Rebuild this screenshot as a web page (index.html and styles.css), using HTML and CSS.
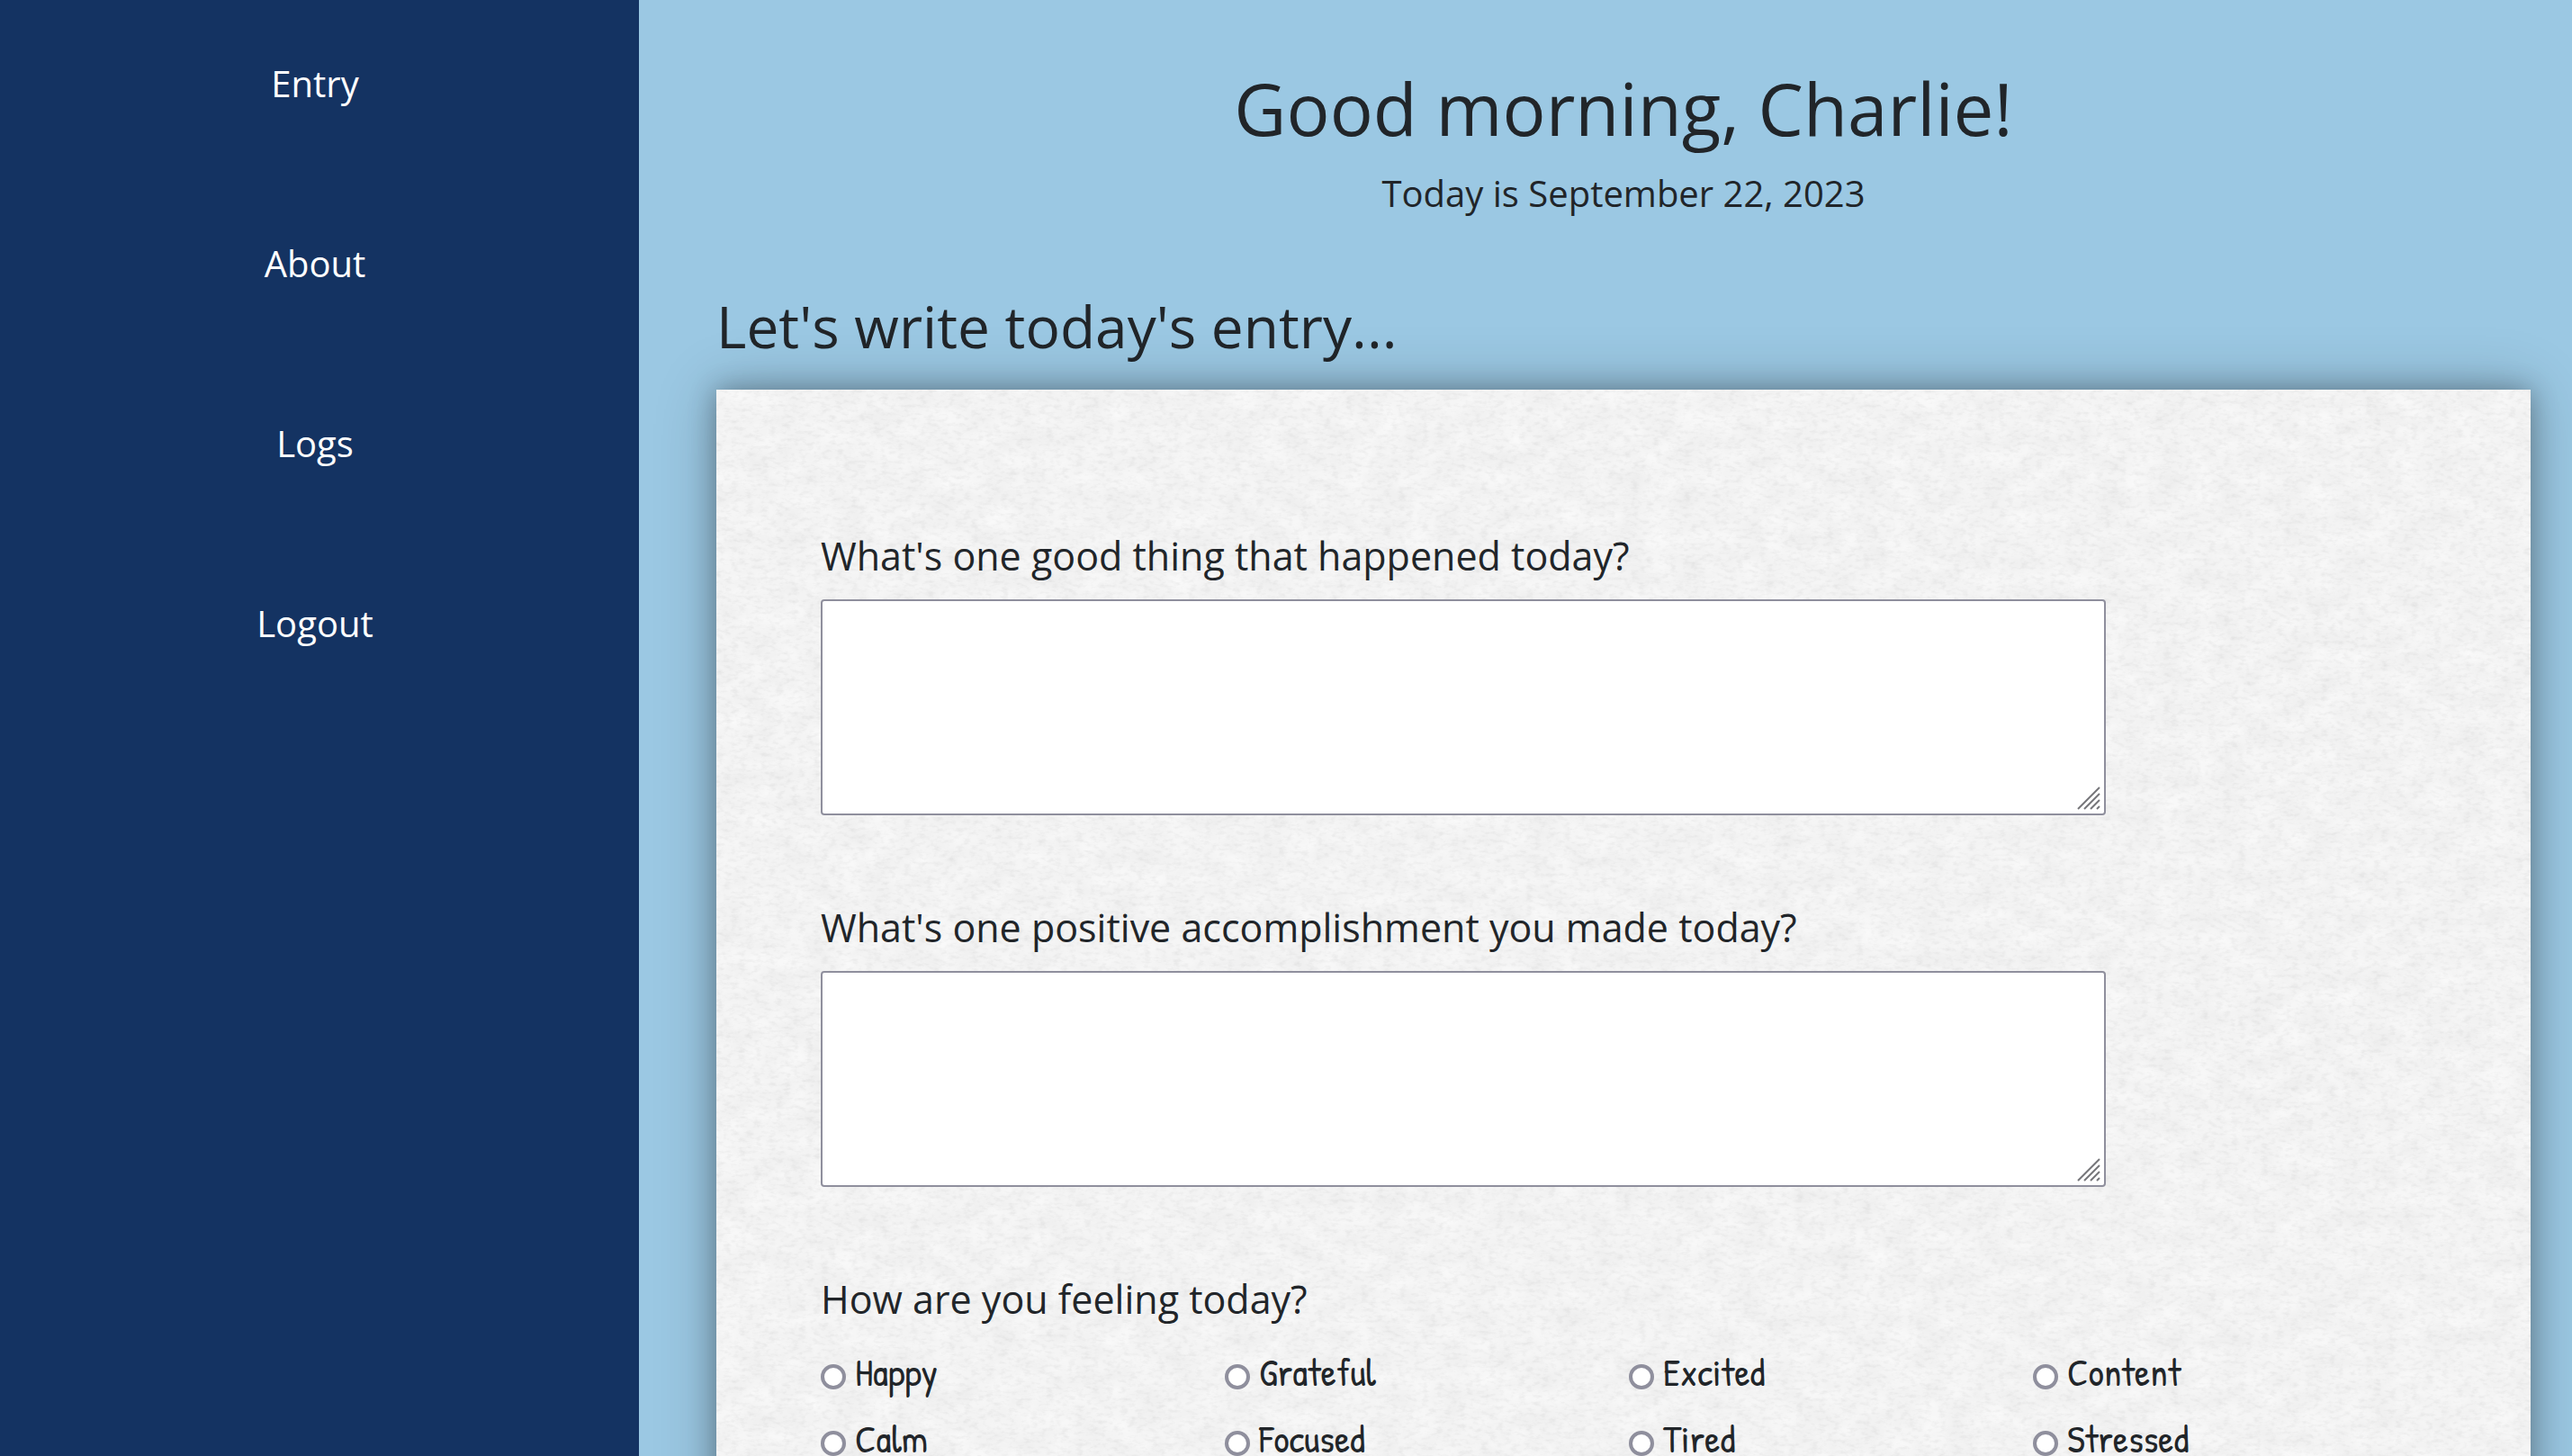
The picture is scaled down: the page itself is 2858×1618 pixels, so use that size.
FILE: index.html
```html
<!DOCTYPE html>
<html lang="en">
<head>
<meta charset="utf-8">
<meta name="viewport" content="width=device-width, initial-scale=1">
<title>Entry</title>
<link rel="stylesheet" href="styles.css">
</head>
<body>
<div class="app">
  <nav class="sidebar">
    <a href="#entry">Entry</a>
    <a href="#about">About</a>
    <a href="#logs">Logs</a>
    <a href="#logout">Logout</a>
  </nav>
  <main class="main">
    <header class="greeting">
      <h1>Good morning, Charlie!</h1>
      <p>Today is September 22, 2023</p>
    </header>
    <h2>Let's write today's entry...</h2>
    <form class="paper">
      <svg class="texture" aria-hidden="true">
        <filter id="grain" x="0" y="0" width="100%" height="100%" color-interpolation-filters="sRGB">
          <feTurbulence type="fractalNoise" baseFrequency="0.03 0.045" numOctaves="5" seed="8" result="noise"/>
          <feColorMatrix in="noise" type="matrix" values="0.055 0 0 0 0.928  0.055 0 0 0 0.928  0.055 0 0 0 0.928  0 0 0 0 1" result="mottle"/>
          <feTurbulence type="fractalNoise" baseFrequency="0.12 0.24" numOctaves="3" seed="3"/>
          <feColorMatrix type="matrix" values="0.11 0 0 0 0.941  0.11 0 0 0 0.941  0.11 0 0 0 0.941  0 0 0 0 1" result="fibre"/>
          <feBlend in="mottle" in2="fibre" mode="multiply"/>
        </filter>
        <rect width="100%" height="100%" filter="url(#grain)"/>
      </svg>
      <div class="field">
        <label for="good">What's one good thing that happened today?</label>
        <div class="box">
          <textarea id="good"></textarea>
          <svg class="grip" viewBox="0 0 26 26" aria-hidden="true"><path d="M1 25 25 1M8 25 25 8M15 25 25 15M22 25 25 22"/></svg>
        </div>
      </div>
      <div class="field">
        <label for="accomplishment">What's one positive accomplishment you made today?</label>
        <div class="box">
          <textarea id="accomplishment"></textarea>
          <svg class="grip" viewBox="0 0 26 26" aria-hidden="true"><path d="M1 25 25 1M8 25 25 8M15 25 25 15M22 25 25 22"/></svg>
        </div>
      </div>
      <fieldset class="field">
        <legend>How are you feeling today?</legend>
        <div class="moods">
          <label><input type="radio" name="mood">Happy</label>
          <label><input type="radio" name="mood">Grateful</label>
          <label><input type="radio" name="mood">Excited</label>
          <label><input type="radio" name="mood">Content</label>
          <label><input type="radio" name="mood">Calm</label>
          <label><input type="radio" name="mood">Focused</label>
          <label><input type="radio" name="mood">Tired</label>
          <label><input type="radio" name="mood">Stressed</label>
        </div>
      </fieldset>
    </form>
  </main>
</div>
</body>
</html>
```
FILE: styles.css
```css
* { box-sizing: border-box; }
body {
  margin: 0;
  font-family: "Open Sans", "Noto Sans", sans-serif;
  font-size: 40px;
  line-height: 60px;
  color: #212529;
  background: #9bc8e3;
}
h1, h2, p { margin: 0; font-weight: 400; }
.app { display: flex; height: 100vh; overflow: hidden; }
.sidebar {
  flex: 0 0 710px;
  display: flex;
  flex-direction: column;
  align-items: center;
  gap: 140px;
  padding: 63px 10px 63px 0;
  background: #143362;
}
.sidebar a { color: #fff; text-decoration: none; }
.main {
  flex: 1;
  min-width: 0;
  padding: 72px 46px 0 86px;
  overflow-y: auto;
  scrollbar-width: none;
}
.greeting { text-align: center; margin-bottom: 80px; }
h1 { font-size: 80px; line-height: 96px; margin-bottom: 17px; }
h2 { font-size: 64px; line-height: 76px; margin-bottom: 32px; }
.paper {
  position: relative;
  isolation: isolate;
  padding: 152px 104px 80px 116px;
  background: #f2f2f2;
  box-shadow: 0 0 28px rgba(0, 0, 0, .3), 0 0 64px rgba(0, 0, 0, .24);
}
.texture {
  position: absolute;
  inset: 0;
  z-index: -1;
  width: 100%;
  height: 100%;
}
.field { margin: 0 0 92px; padding: 0; border: 0; }
.field > label, legend {
  display: block;
  padding: 0;
  font-size: 43px;
  line-height: 66px;
  margin-bottom: 15px;
}
.box { position: relative; width: 1428px; max-width: 100%; }
textarea {
  display: block;
  width: 100%;
  height: 240px;
  padding: 4px;
  border: 2px solid #8f8f9d;
  border-radius: 4px;
  background: #fff;
  font: inherit;
  resize: none;
}
.grip {
  position: absolute;
  right: 6px;
  bottom: 6px;
  width: 26px;
  height: 26px;
  fill: none;
  stroke: #76767a;
  stroke-width: 2;
  pointer-events: none;
}
.moods {
  display: grid;
  grid-template-columns: repeat(4, 1fr);
  gap: 14px 0;
  padding-top: 2px;
}
.moods label {
  display: flex;
  align-items: center;
  gap: 10px;
  font-family: "Patrick Hand", "Open Sans", sans-serif;
  font-size: 43px;
}
input[type="radio"] {
  appearance: none;
  width: 28px;
  height: 28px;
  margin: 12px 0 0;
  border: 4px solid #8f8f9d;
  border-radius: 50%;
  background: #fff;
}
input[type="radio"]:checked { box-shadow: inset 0 0 0 4px #fff; background: #143362; }
```
